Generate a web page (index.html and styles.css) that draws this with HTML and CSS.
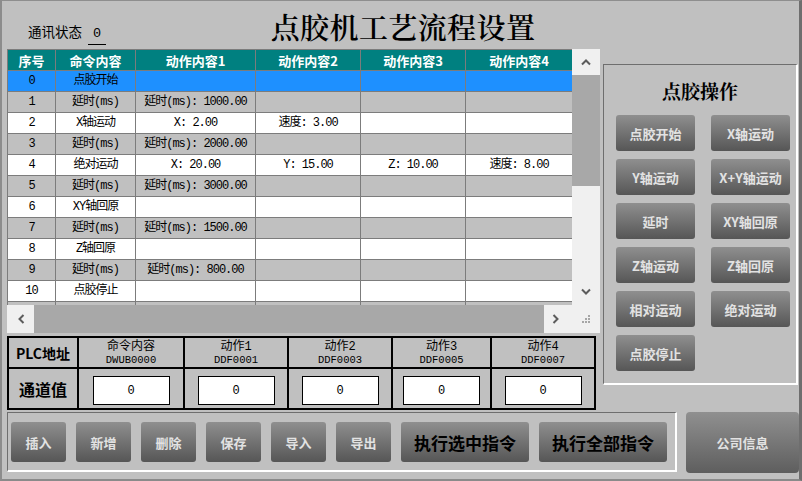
FILE: index.html
```html
<!DOCTYPE html>
<html lang="zh-CN">
<head>
<meta charset="utf-8">
<title>点胶机工艺流程设置</title>
<link rel="stylesheet" href="styles.css">
</head>
<body>
<div class="app">
  <header class="top">
    <div class="status"><span class="status-label">通讯状态</span><span class="status-value">0</span></div>
    <h1 class="title">点胶机工艺流程设置</h1>
    <div class="top-spacer"></div>
  </header>

  <div class="middle">
    <div class="left">
      <div class="grid-wrap">
        <div class="grid-row">
          <div class="viewport">
            <table class="grid">
              <colgroup>
                <col class="c-no"><col class="c-cmd"><col class="c-a1"><col class="c-a2"><col class="c-a3"><col class="c-a4">
              </colgroup>
              <thead>
                <tr><th>序号</th><th>命令内容</th><th>动作内容1</th><th>动作内容2</th><th>动作内容3</th><th>动作内容4</th></tr>
              </thead>
              <tbody>
                <tr class="sel"><td>0</td><td>点胶开始</td><td></td><td></td><td></td><td></td></tr>
                <tr><td>1</td><td>延时(ms)</td><td>延时(ms): 1000.00</td><td></td><td></td><td></td></tr>
                <tr><td>2</td><td>X轴运动</td><td>X: 2.00</td><td>速度: 3.00</td><td></td><td></td></tr>
                <tr><td>3</td><td>延时(ms)</td><td>延时(ms): 2000.00</td><td></td><td></td><td></td></tr>
                <tr><td>4</td><td>绝对运动</td><td>X: 20.00</td><td>Y: 15.00</td><td>Z: 10.00</td><td>速度: 8.00</td></tr>
                <tr><td>5</td><td>延时(ms)</td><td>延时(ms): 3000.00</td><td></td><td></td><td></td></tr>
                <tr><td>6</td><td>XY轴回原</td><td></td><td></td><td></td><td></td></tr>
                <tr><td>7</td><td>延时(ms)</td><td>延时(ms): 1500.00</td><td></td><td></td><td></td></tr>
                <tr><td>8</td><td>Z轴回原</td><td></td><td></td><td></td><td></td></tr>
                <tr><td>9</td><td>延时(ms)</td><td>延时(ms): 800.00</td><td></td><td></td><td></td></tr>
                <tr><td>10</td><td>点胶停止</td><td></td><td></td><td></td><td></td></tr>
                <tr><td></td><td></td><td></td><td></td><td></td><td></td></tr>
              </tbody>
            </table>
          </div>
          <div class="vscroll">
            <div class="sb-btn sb-v">
              <svg width="10" height="8" viewBox="0 0 10 8"><polyline points="1,6.5 5,2.5 9,6.5" fill="none" stroke="#5c5c5c" stroke-width="2"/></svg>
            </div>
            <div class="vthumb"></div>
            <div class="vtrack"></div>
            <div class="sb-btn sb-v">
              <svg width="10" height="8" viewBox="0 0 10 8"><polyline points="1,1.5 5,5.5 9,1.5" fill="none" stroke="#5c5c5c" stroke-width="2"/></svg>
            </div>
          </div>
        </div>
        <div class="hscroll">
          <div class="sb-btn sb-left">
            <svg width="8" height="10" viewBox="0 0 8 10"><polyline points="6.5,1 2.5,5 6.5,9" fill="none" stroke="#5c5c5c" stroke-width="2"/></svg>
          </div>
          <div class="htrack"></div>
          <div class="sb-btn sb-right">
            <svg width="8" height="10" viewBox="0 0 8 10"><polyline points="1.5,1 5.5,5 1.5,9" fill="none" stroke="#5c5c5c" stroke-width="2"/></svg>
          </div>
          <div class="sb-btn grip">
            <svg width="8" height="8" viewBox="0 0 8 8" fill="#a6a6a6">
              <rect x="6" y="0" width="2" height="2"/>
              <rect x="3" y="3" width="2" height="2"/><rect x="6" y="3" width="2" height="2"/>
              <rect x="0" y="6" width="2" height="2"/><rect x="3" y="6" width="2" height="2"/><rect x="6" y="6" width="2" height="2"/>
            </svg>
          </div>
        </div>
      </div>

      <div class="plc">
        <div class="plc-cell plc-label">PLC地址</div>
        <div class="plc-cell plc-head"><span class="hname">命令内容</span><span class="addr">DWUB0000</span></div>
        <div class="plc-cell plc-head"><span class="hname">动作1</span><span class="addr">DDF0001</span></div>
        <div class="plc-cell plc-head"><span class="hname">动作2</span><span class="addr">DDF0003</span></div>
        <div class="plc-cell plc-head"><span class="hname">动作3</span><span class="addr">DDF0005</span></div>
        <div class="plc-cell plc-head"><span class="hname">动作4</span><span class="addr">DDF0007</span></div>
        <div class="plc-cell plc-label plc-label-lg">通道值</div>
        <div class="plc-cell"><div class="val">0</div></div>
        <div class="plc-cell"><div class="val">0</div></div>
        <div class="plc-cell"><div class="val">0</div></div>
        <div class="plc-cell"><div class="val">0</div></div>
        <div class="plc-cell"><div class="val">0</div></div>
      </div>
    </div>

    <section class="ops">
      <h2 class="ops-title">点胶操作</h2>
      <div class="ops-grid">
        <button class="btn op">点胶开始</button>
        <button class="btn op">X轴运动</button>
        <button class="btn op">Y轴运动</button>
        <button class="btn op">X+Y轴运动</button>
        <button class="btn op">延时</button>
        <button class="btn op">XY轴回原</button>
        <button class="btn op">Z轴运动</button>
        <button class="btn op">Z轴回原</button>
        <button class="btn op">相对运动</button>
        <button class="btn op">绝对运动</button>
        <button class="btn op">点胶停止</button>
      </div>
    </section>
  </div>

  <div class="bottom">
    <div class="toolbar">
      <button class="btn btn-sm">插入</button>
      <button class="btn btn-sm">新增</button>
      <button class="btn btn-sm">删除</button>
      <button class="btn btn-sm">保存</button>
      <button class="btn btn-sm">导入</button>
      <button class="btn btn-sm">导出</button>
      <button class="btn btn-lg">执行选中指令</button>
      <button class="btn btn-lg">执行全部指令</button>
    </div>
    <button class="btn company">公司信息</button>
  </div>
</div>
</body>
</html>
```

FILE: styles.css
```css
* {
  box-sizing: border-box;
}

html,
body {
  margin: 0;
  padding: 0;
}

body {
  width: 802px;
  height: 481px;
  overflow: hidden;
  background: #c0c0c0;
  font-family: "Noto Sans CJK SC", sans-serif;
  color: #000;
}

.app {
  width: 802px;
  height: 481px;
  border-left: 2px solid #8c8c8c;
  border-top: 1px solid #8e8e8e;
  border-right: 3px solid #6e6e6e;
  border-bottom: 2px solid #8a8a8a;
  padding-left: 5px;
  background: #c0c0c0;
  display: flex;
  flex-direction: column;
}

/* ---------- header ---------- */
.top {
  height: 48px;
  flex: none;
  display: grid;
  grid-template-columns: 1fr auto 1fr;
}

.status {
  padding-top: 22px;
  padding-left: 21px;
  font-size: 13.5px;
  line-height: 16px;
  white-space: nowrap;
}

.status-value {
  display: inline-block;
  width: 18px;
  margin-left: 6px;
  padding-bottom: 2px;
  text-align: center;
  border-bottom: 1px solid #000;
  font-family: "Liberation Mono", monospace;
}

.title {
  margin: 0;
  padding-top: 11px;
  font-family: "Noto Serif CJK SC", "Noto Sans CJK SC", serif;
  font-size: 29px;
  line-height: 29px;
  font-weight: 600;
  letter-spacing: 0.4px;
  white-space: nowrap;
}

/* ---------- middle ---------- */
.middle {
  display: flex;
  height: 361px;
  flex: none;
}

.left {
  width: 593px;
  display: flex;
  flex-direction: column;
}

.grid-wrap {
  height: 284px;
  display: flex;
  flex-direction: column;
}

.grid-row {
  display: flex;
  height: 256px;
}

.viewport {
  width: 565px;
  height: 256px;
  overflow: hidden;
  background: #c0c0c0;
}

.grid {
  width: 565px;
  table-layout: fixed;
  border-collapse: collapse;
}

.c-no { width: 48px; }
.c-cmd { width: 80px; }
.c-a1 { width: 120px; }
.c-a2 { width: 105px; }
.c-a3 { width: 105px; }
.c-a4 { width: 107px; }

.grid tr {
  height: 21px;
}

.grid th,
.grid td {
  padding: 0;
  border: 1px solid #7c7c7c;
  text-align: center;
  white-space: nowrap;
  overflow: hidden;
}

.grid th {
  background: #008080;
  color: #fff;
  font-family: "Noto Sans CJK SC", sans-serif;
  font-weight: bold;
  font-size: 13px;
  line-height: 15px;
}

.grid td {
  background: #fff;
  font-family: "Liberation Mono", "Noto Sans CJK SC", monospace;
  font-size: 12px;
  line-height: 14px;
  letter-spacing: -1px;
}

.grid tbody tr:nth-child(even) td {
  background: #c0c0c0;
}

.grid tbody tr.sel td {
  background: #1e90ff;
}

/* scrollbars */
.vscroll {
  width: 28px;
  height: 256px;
  display: flex;
  flex-direction: column;
  background: #f0f0f0;
}

.sb-btn {
  display: flex;
  align-items: center;
  justify-content: center;
  background: #f0f0f0;
  flex: none;
}

.sb-v {
  height: 26px;
}

.vthumb {
  height: 111px;
  background: #a8a8a8;
  flex: none;
}

.vtrack {
  flex: 1;
  background: #f0f0f0;
}

.hscroll {
  display: flex;
  height: 28px;
}

.sb-left {
  width: 27px;
}

.htrack {
  width: 510px;
  background: #a8a8a8;
}

.sb-right {
  width: 28px;
  padding-right: 4px;
}

.grip {
  width: 28px;
  align-items: flex-end;
  padding-bottom: 10px;
}

/* PLC table */
.plc {
  margin-top: 3px;
  width: 589px;
  display: grid;
  grid-template-columns: 68px 104px 102px 102px 97px 102px;
  grid-template-rows: 29px 39px;
  gap: 2px;
  padding: 2px;
  background: #000;
}

.plc-cell {
  background: #c0c0c0;
  display: flex;
  align-items: center;
  justify-content: center;
  overflow: hidden;
}

.plc-label {
  font-weight: bold;
  font-size: 14px;
  font-family: "Noto Sans CJK SC", serif;
}

.plc-label-lg {
  font-size: 16px;
}

.plc-head {
  flex-direction: column;
  font-family: "Liberation Mono", "Noto Sans CJK SC", monospace;
}

.hname {
  display: block;
  font-size: 12px;
  line-height: 14px;
}

.addr {
  display: block;
  font-size: 10.5px;
  line-height: 12px;
}

.val {
  width: 77px;
  height: 29px;
  margin-top: 4px;
  background: #fff;
  border: 1px solid #000;
  display: flex;
  align-items: center;
  justify-content: center;
  font-family: "Liberation Mono", monospace;
  font-size: 12px;
}

/* ops panel */
.ops {
  margin-left: 3px;
  margin-top: 15px;
  width: 195px;
  height: 321px;
  border-top: 1px solid #6e6e6e;
  border-left: 1px solid #6e6e6e;
  border-right: 2px solid #fff;
  border-bottom: 2px solid #fff;
  padding: 16px 0 0 12px;
}

.ops-title {
  margin: 0;
  padding-right: 12px;
  text-align: center;
  font-family: "Noto Serif CJK SC", "Noto Sans CJK SC", serif;
  font-size: 19px;
  line-height: 19px;
  font-weight: bold;
}

.ops-grid {
  margin-top: 15px;
  display: grid;
  grid-template-columns: 79px 79px;
  grid-auto-rows: 36px;
  column-gap: 16px;
  row-gap: 8px;
}

/* buttons */
.btn {
  border: 0;
  padding: 0;
  border-radius: 3px;
  background: linear-gradient(#8f8f8f, #565656);
  color: #e2e2e2;
  font-family: "Noto Sans CJK SC", sans-serif;
  font-weight: bold;
  font-size: 13px;
  white-space: nowrap;
}

.op {
  width: 79px;
  height: 36px;
}

/* bottom */
.bottom {
  display: flex;
  margin-top: 2px;
  height: 61px;
  flex: none;
}

.toolbar {
  width: 670px;
  height: 60px;
  border-top: 1px solid #6e6e6e;
  border-left: 1px solid #6e6e6e;
  border-right: 2px solid #fff;
  border-bottom: 2px solid #fff;
  padding: 9px 0 0 3px;
  display: flex;
  align-items: flex-start;
  gap: 10px;
}

.btn-sm {
  width: 55px;
  height: 40px;
}

.btn-lg {
  width: 128px;
  height: 40px;
  color: #000;
  font-size: 17px;
}

.company {
  margin-left: 9px;
  width: 113px;
  height: 61px;
  border-radius: 4px;
  background: linear-gradient(#909090, #5e5e5e);
}
```
